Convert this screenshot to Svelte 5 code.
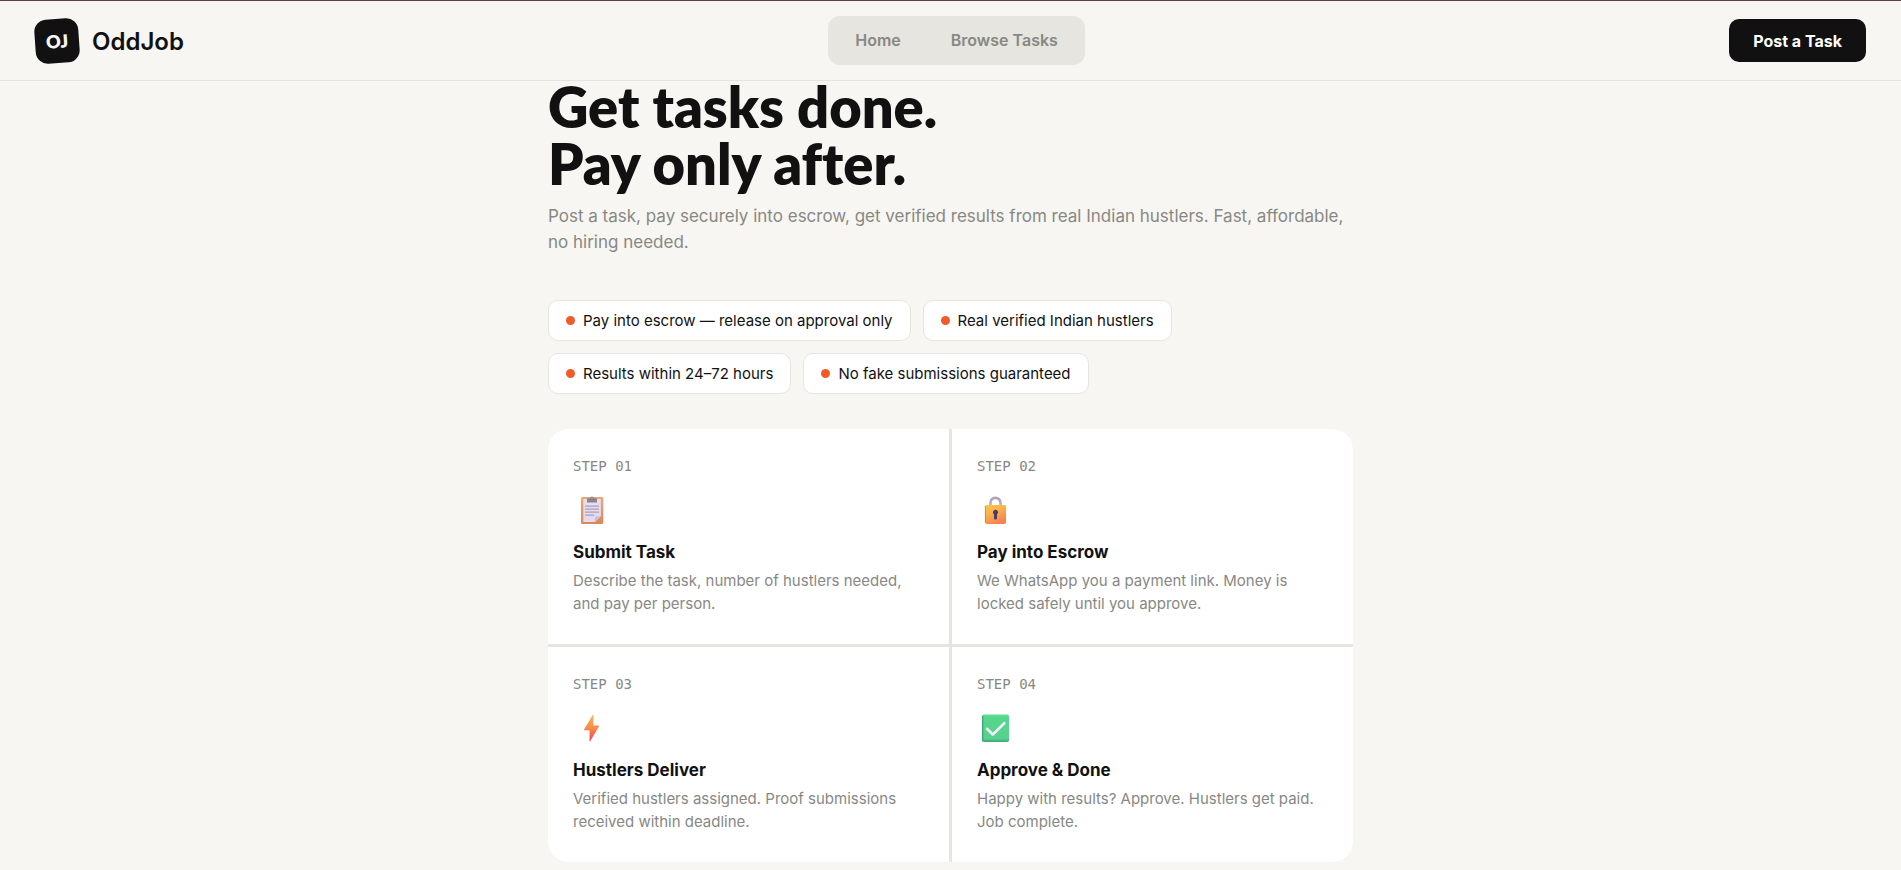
<script>
  const chips = [
    'Pay into escrow — release on approval only',
    'Real verified Indian hustlers',
    'Results within 24–72 hours',
    'No fake submissions guaranteed'
  ];

  const steps = [
    { label: 'STEP 01', icon: 'clipboard', title: 'Submit Task', text: 'Describe the task, number of hustlers needed, and pay per person.' },
    { label: 'STEP 02', icon: 'lock', title: 'Pay into Escrow', text: 'We WhatsApp you a payment link. Money is locked safely until you approve.' },
    { label: 'STEP 03', icon: 'bolt', title: 'Hustlers Deliver', text: 'Verified hustlers assigned. Proof submissions received within deadline.' },
    { label: 'STEP 04', icon: 'check', title: 'Approve & Done', text: 'Happy with results? Approve. Hustlers get paid. Job complete.' }
  ];
</script>

<header class="bar">
  <a class="brand" href="#home">
    <span class="mark">OJ</span>
    <span class="name">OddJob</span>
  </a>
  <nav class="menu">
    <a href="#home">Home</a>
    <a href="#tasks">Browse Tasks</a>
  </nav>
  <button class="post" type="button">Post a Task</button>
</header>

<main>
  <h1>Get tasks done.<br />Pay only after.</h1>
  <p class="lead">
    Post a task, pay securely into escrow, get verified results from real Indian hustlers. Fast, affordable, no hiring needed.
  </p>

  <ul class="chips">
    {#each chips as chip}
      <li><span class="dot"></span>{chip}</li>
    {/each}
  </ul>

  <section class="steps">
    {#each steps as step}
      <article>
        <p class="label">{step.label}</p>
        <svg class="icon" viewBox="0 0 36 28" aria-hidden="true">
          {#if step.icon === 'clipboard'}
            <defs>
              <linearGradient id="board" x1="0" y1="0" x2="0" y2="1">
                <stop offset="0" stop-color="#e8a974" /><stop offset="1" stop-color="#dc8858" />
              </linearGradient>
              <linearGradient id="sheet" x1="0" y1="0" x2="0" y2="1">
                <stop offset="0" stop-color="#e6e0ee" /><stop offset="1" stop-color="#e5d8f1" />
              </linearGradient>
            </defs>
            <rect x="8" y="1" width="22.3" height="27" rx="1.6" fill="url(#board)" />
            <path d="M10.3 3h17.6v17.2l-6 5.8H10.3z" fill="url(#sheet)" />
            <path d="M27.9 20.2h-4.4a1.6 1.6 0 0 0-1.6 1.6V26z" fill="#c9bdd8" />
            <path d="M14 3.2q0-1 1-1h1.8Q17.2 .5 19 .5t2.2 1.7H23q1 0 1 1v3.2H14z" fill="#8d8192" />
            <circle cx="19" cy="2.3" r=".7" fill="#b7a9ba" />
            <path d="M12.5 10.2h13M12.5 13.2h13M12.5 16.2h13M12.5 19.2h8.3" stroke="#aaa0b6" stroke-width="1.3" stroke-linecap="round" />
          {:else if step.icon === 'lock'}
            <defs>
              <linearGradient id="brass" x1="0" y1="0" x2=".5" y2="1">
                <stop offset="0" stop-color="#fdcb45" /><stop offset=".5" stop-color="#fbad4b" /><stop offset="1" stop-color="#f68354" />
              </linearGradient>
              <linearGradient id="steel" x1="0" y1="0" x2="0" y2="1">
                <stop offset="0" stop-color="#aaa5b2" /><stop offset="1" stop-color="#c4b4d0" />
              </linearGradient>
            </defs>
            <path d="M13.5 10V6.8a5 5 0 0 1 10 0V10" fill="none" stroke="url(#steel)" stroke-width="2.7" />
            <rect x="8" y="9" width="21" height="19" rx="1.8" fill="url(#brass)" />
            <path d="M8.4 10v16.5" stroke="#b98745" stroke-width=".8" />
            <path d="M18.5 13.8a2.6 2.6 0 0 1 1.5 4.7v3.5a1.5 1.5 0 0 1-3 0v-3.5a2.6 2.6 0 0 1 1.5-4.7z" fill="#4b3b68" />
          {:else if step.icon === 'bolt'}
            <defs>
              <linearGradient id="spark" x1="0" y1="0" x2="0" y2="1">
                <stop offset="0" stop-color="#fcb84b" /><stop offset=".5" stop-color="#f98a4b" /><stop offset="1" stop-color="#f0405c" />
              </linearGradient>
            </defs>
            <path d="M19.8 .8q.7-.7.7.2l-.3 10.5h5.5q.7 0 .3.7L17.2 27.3q-.6.8-.7-.2l.1-10.8h-5.3q-.7 0-.3-.7z" fill="url(#spark)" />
          {:else}
            <defs>
              <linearGradient id="tile" x1="0" y1="0" x2="0" y2="1">
                <stop offset="0" stop-color="#5de491" /><stop offset=".1" stop-color="#54d78b" /><stop offset=".88" stop-color="#57d18f" /><stop offset="1" stop-color="#3fa376" />
              </linearGradient>
            </defs>
            <rect x="5" y=".5" width="27" height="27.5" rx="1.8" fill="url(#tile)" />
            <path d="M5.7 2v24.5" stroke="#3f9f70" stroke-width="1.2" />
            <path d="M10 14.8l5.8 5.7L27.3 9.2" fill="none" stroke="#f4eefb" stroke-width="2.6" stroke-linecap="round" stroke-linejoin="round" />
          {/if}
        </svg>
        <h2>{step.title}</h2>
        <p class="text">{step.text}</p>
      </article>
    {/each}
  </section>
</main>

<style>
  :global(body) {
    background: #f7f6f2;
    color: #111;
    font-family: Inter, 'Liberation Sans', sans-serif;
  }

  .bar {
    position: fixed;
    inset: 0 0 auto;
    z-index: 1;
    box-sizing: border-box;
    height: 81px;
    padding: 0 35px;
    display: flex;
    align-items: center;
    justify-content: space-between;
    background: #f7f6f2;
    border-top: 1px solid #544244;
    border-bottom: 1px solid #e5e4df;
  }

  .bar a {
    color: inherit;
    text-decoration: none;
  }

  .brand {
    display: flex;
    align-items: center;
    gap: 13px;
  }

  .mark {
    width: 44px;
    height: 44px;
    border-radius: 12px;
    background: #111;
    color: #f7f6f2;
    display: grid;
    place-items: center;
    font: 800 18px Lato, sans-serif;
    transform: rotate(-4deg);
  }

  .name {
    padding-top: 2px;
    font-size: 24px;
    line-height: 30px;
    font-weight: 600;
  }

  .menu {
    display: flex;
    gap: 6px;
    padding: 5px;
    border-radius: 12px;
    background: #e6e5e0;
  }

  .bar .menu a {
    padding: 0 22px;
    font-size: 16px;
    line-height: 39px;
    font-weight: 600;
    color: #888883;
  }

  .post {
    height: 43px;
    padding: 0 24px;
    border: 0;
    border-radius: 10px;
    background: #111;
    color: #fff;
    font: inherit;
    font-size: 16px;
    font-weight: 700;
  }

  main {
    max-width: 805px;
    margin: 0 auto;
    padding: 78px 24px 8px;
  }

  h1 {
    margin: 0 0 11px;
    font-family: Lato, sans-serif;
    font-size: 56px;
    line-height: 57px;
    font-weight: 800;
    font-variant-ligatures: none;
  }

  .lead {
    margin: 0 0 45px;
    font-size: 17px;
    line-height: 26px;
    color: #888883;
  }

  .chips {
    margin: 0 0 35px;
    padding: 0;
    list-style: none;
    display: flex;
    flex-wrap: wrap;
    gap: 12px;
  }

  .chips li {
    display: flex;
    align-items: center;
    padding: 0 17px;
    border: 1px solid #e6e5df;
    border-radius: 10px;
    background: #fff;
    font-size: 15px;
    line-height: 39px;
  }

  .dot {
    width: 9px;
    height: 9px;
    margin-right: 8px;
    border-radius: 50%;
    background: #f15a29;
  }

  .steps {
    display: grid;
    grid-template-columns: repeat(auto-fit, minmax(320px, 1fr));
    gap: 3px;
    border-radius: 20px;
    overflow: hidden;
    background: #e6e5df;
  }

  article {
    padding: 28px 25px 29px;
    background: #fff;
  }

  .label {
    margin: 0 0 21px;
    font-family: 'DejaVu Sans Mono', monospace;
    font-size: 14px;
    line-height: 18px;
    color: #888883;
  }

  .icon {
    display: block;
    width: 36px;
    height: 28px;
  }

  h2 {
    margin: 17px 0 6px;
    font-size: 17px;
    line-height: 22px;
    font-weight: 700;
  }

  .text {
    margin: 0;
    font-size: 15px;
    line-height: 23px;
    color: #888883;
  }
</style>
